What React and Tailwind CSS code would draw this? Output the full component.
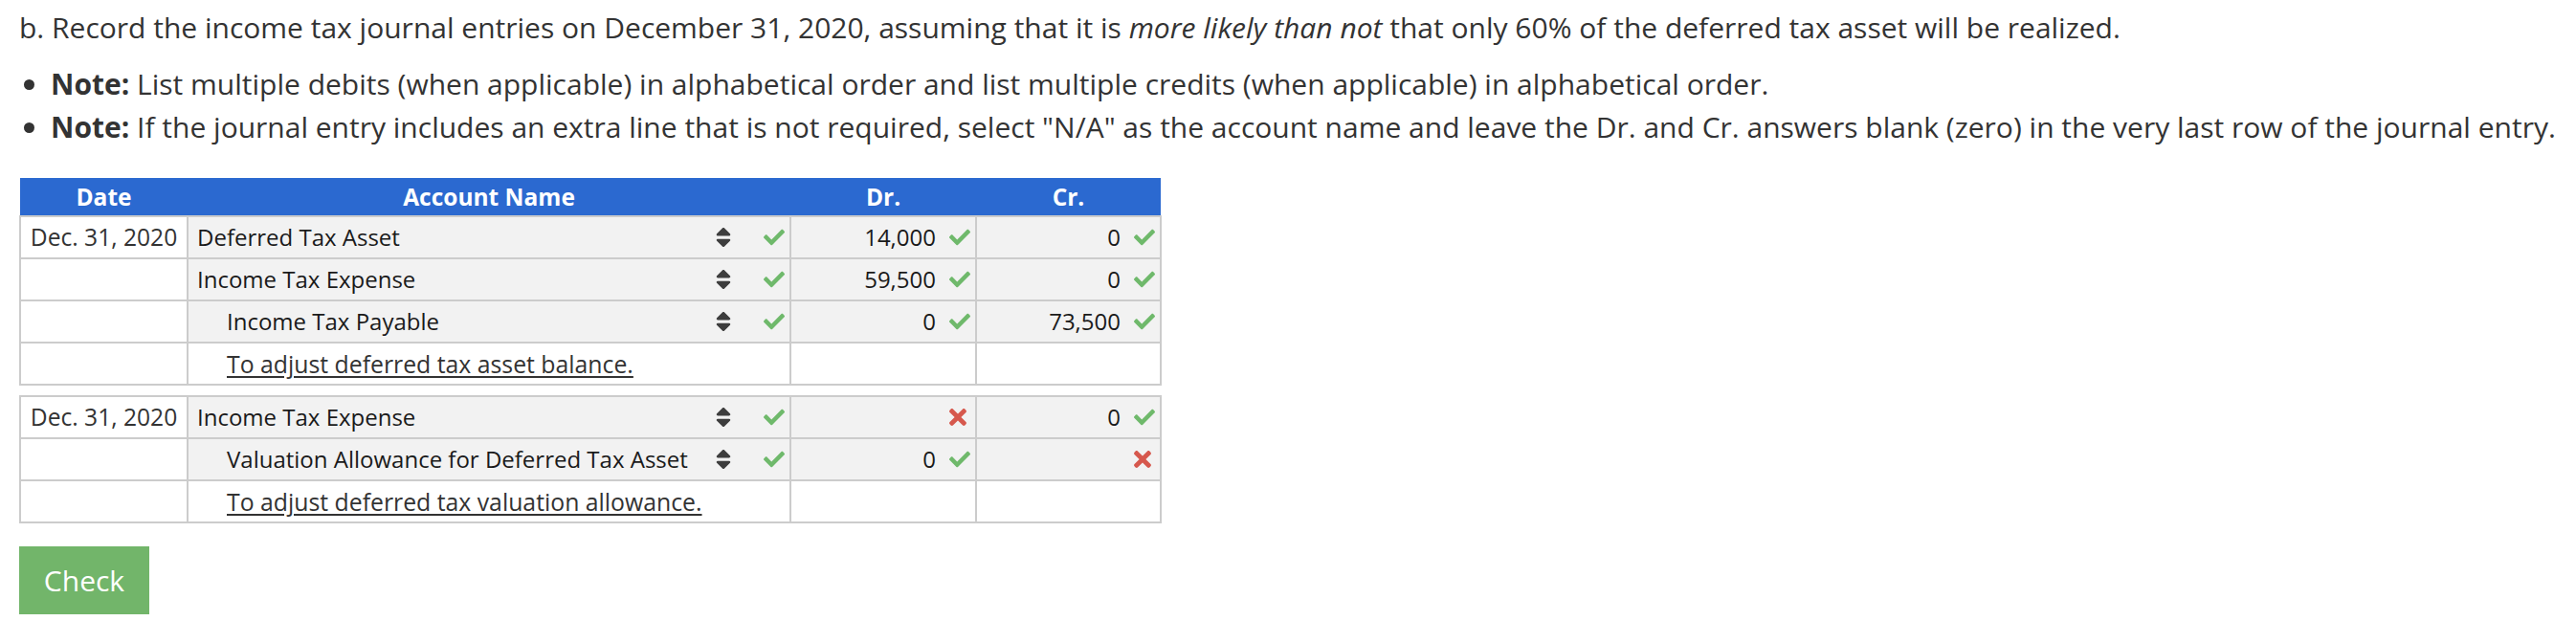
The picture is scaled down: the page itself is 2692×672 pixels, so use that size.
import { FaCheck, FaTimes, FaSort } from 'react-icons/fa'

const entries = [
  {
    rows: [
      { date: 'Dec. 31, 2020', name: 'Deferred Tax Asset', dr: '14,000', drOk: true, cr: '0', crOk: true },
      { name: 'Income Tax Expense', dr: '59,500', drOk: true, cr: '0', crOk: true },
      { name: 'Income Tax Payable', indent: true, dr: '0', drOk: true, cr: '73,500', crOk: true },
    ],
    memo: 'To adjust deferred tax asset balance.',
  },
  {
    rows: [
      { date: 'Dec. 31, 2020', name: 'Income Tax Expense', dr: '', drOk: false, cr: '0', crOk: true },
      { name: 'Valuation Allowance for Deferred Tax Asset', indent: true, dr: '0', drOk: true, cr: '', crOk: false },
    ],
    memo: 'To adjust deferred tax valuation allowance.',
  },
]

const Mark = ({ ok }) =>
  ok ? (
    <FaCheck size={22} className="shrink-0 text-[#6fb96b]" />
  ) : (
    <span className="flex w-[22px] justify-end">
      <FaTimes size={26} className="shrink-0 text-[#d6584d]" />
    </span>
  )

function Amount({ value, ok }) {
  return (
    <td className="border-2 border-[#ccc] bg-[#f2f2f2] p-0">
      <div className="flex h-[42px] items-center justify-end gap-[14px] pr-[5px] text-[#1a1a1a]">
        {value && <span>{value}</span>}
        <Mark ok={ok} />
      </div>
    </td>
  )
}

function Journal({ entry, header }) {
  return (
    <table className="w-[1192px] table-fixed border-collapse">
      <colgroup>
        <col className="w-[175px]" />
        <col className="w-[630px]" />
        <col className="w-[194px]" />
        <col className="w-[193px]" />
      </colgroup>
      {header && (
        <thead>
          <tr className="h-[40px] bg-[#2b69d0] text-[24.5px] text-white font-bold">
            <th className="p-0 font-bold">Date</th>
            <th className="p-0 font-bold">Account Name</th>
            <th className="p-0 font-bold">Dr.</th>
            <th className="p-0 font-bold">Cr.</th>
          </tr>
        </thead>
      )}
      <tbody>
        {entry.rows.map((r, i) => (
          <tr key={i}>
            <td className="border-2 border-[#ccc] bg-white p-0 text-center text-[24.6px] text-[#333]">{r.date}</td>
            <td className="border-2 border-[#ccc] bg-[#f2f2f2] p-0">
              <div className="flex h-[42px] items-center pr-[5px] text-[#1a1a1a]">
                <span className={r.indent ? 'pl-[40px]' : 'pl-[9px]'}>{r.name}</span>
                <FaSort size={26} className="ml-auto text-[#3d3d3d]" />
                <span className="ml-[29px] flex">
                  <Mark ok />
                </span>
              </div>
            </td>
            <Amount value={r.dr} ok={r.drOk} />
            <Amount value={r.cr} ok={r.crOk} />
          </tr>
        ))}
        <tr>
          <td className="border-2 border-[#ccc] bg-white p-0"></td>
          <td className="border-2 border-[#ccc] bg-white p-0">
            <div className="flex h-[42px] items-center pl-[40px] text-[24.8px] text-[#333] underline underline-offset-[3px]">
              {entry.memo}
            </div>
          </td>
          <td className="border-2 border-[#ccc] bg-white p-0"></td>
          <td className="border-2 border-[#ccc] bg-white p-0"></td>
        </tr>
      </tbody>
    </table>
  )
}

export default function App() {
  return (
    <div className="min-h-[672px] bg-white pl-[20px] pt-[6px] font-['Open_Sans',sans-serif] text-[30px] leading-[45px] text-[#333]">
      <p>
        b. Record the income tax journal entries on December 31, 2020, assuming that it is{' '}
        <i>more likely than not</i> that only 60% of the deferred tax asset will be realized.
      </p>
      <ul className="mt-[14px] list-disc pl-[33px]">
        <li>
          <b>Note:</b> List multiple debits (when applicable) in alphabetical order and list multiple credits (when
          applicable) in alphabetical order.
        </li>
        <li>
          <b>Note:</b> If the journal entry includes an extra line that is not required, select "N/A" as the account
          name and leave the Dr. and Cr. answers blank (zero) in the very last row of the journal entry.
        </li>
      </ul>
      <div className="mt-[31px] text-[24px] leading-[32px]">
        <Journal entry={entries[0]} header />
        <div className="mt-[10px]">
          <Journal entry={entries[1]} />
        </div>
      </div>
      <button className="mt-[24px] h-[71px] w-[136px] bg-[#72b56a] text-[30px] text-white">Check</button>
    </div>
  )
}
